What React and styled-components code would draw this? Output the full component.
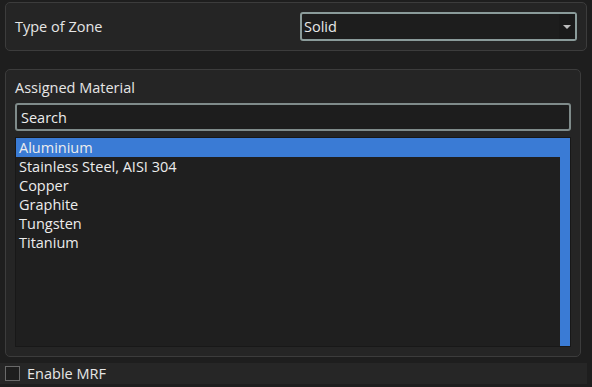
import React from "react";
import styled, { createGlobalStyle } from "styled-components";

const GlobalStyle = createGlobalStyle`
  html, body {
    margin: 0;
    padding: 0;
    background-color: #1e1e1e;
    font-family: "Open Sans", "Noto Sans", sans-serif;
    font-size: 14.5px;
    color: #e8e8e8;
  }
`;

const Page = styled.div`
  width: 592px;
  height: 387px;
  box-sizing: border-box;
  display: flex;
  flex-direction: column;
  padding-top: 2px;
`;

const Panel = styled.div`
  margin-left: 5px;
  width: ${(p) => p.width}px;
  height: ${(p) => p.height}px;
  box-sizing: border-box;
  background-color: #252525;
  border: 1px solid #3c3c3c;
  border-radius: 5px;
`;

const ZoneRow = styled.div`
  display: flex;
  align-items: center;
  justify-content: space-between;
  height: 100%;
  padding: 0 9px 0 9px;
`;

const Label = styled.span`
  font-size: 14.5px;
  color: #e6e6e6;
`;

const Combo = styled.div`
  position: relative;
  width: 277px;
  height: 29px;
  box-sizing: border-box;
  border: 2px solid #8a9b9a;
  border-radius: 3px;
  background-color: #1d1d1d;
  display: flex;
  align-items: center;
  padding-left: 2px;
`;

const Arrow = styled.div`
  position: absolute;
  right: 0;
  top: 0;
  bottom: 0;
  width: 16px;
  background-color: #1a1a1a;
  display: flex;
  align-items: center;
  justify-content: center;

  &::after {
    content: "";
    border-left: 4px solid transparent;
    border-right: 4px solid transparent;
    border-top: 4px solid #bdbdbd;
  }
`;

const MaterialBody = styled.div`
  display: flex;
  flex-direction: column;
  padding: 8px 9px 0 9px;
`;

const Search = styled.div`
  margin-top: 6px;
  height: 28px;
  box-sizing: border-box;
  border: 2px solid #7f8b8a;
  border-radius: 3px;
  background-color: #1d1d1d;
  display: flex;
  align-items: center;
  padding: 1px 0 0 4px;
  color: #ececec;
`;

const List = styled.div`
  position: relative;
  margin-top: 6px;
  height: 210px;
  box-sizing: border-box;
  border: 1px solid #181818;
  background-color: #1f1f1f;
  display: flex;
  flex-direction: column;
  padding-right: 10px;
`;

const Item = styled.div`
  height: 19px;
  line-height: 19px;
  padding-left: 3px;
  background-color: ${(p) => (p.selected ? "#3a7bd5" : "transparent")};
  color: #ececec;
`;

const Scrollbar = styled.div`
  position: absolute;
  right: 0;
  top: 0;
  bottom: 0;
  width: 10px;
  background-color: #3a7bd5;
`;

const Footer = styled.div`
  margin-top: 6px;
  width: 587px;
  height: 21px;
  background-color: #262626;
  display: flex;
  align-items: center;
  gap: 7px;
  padding-left: 5px;
  box-sizing: border-box;
`;

const Check = styled.div`
  width: 15px;
  height: 15px;
  box-sizing: border-box;
  border: 1px solid #6a6a6a;
  background-color: #1e1e1e;
`;

const materials = [
  "Aluminium",
  "Stainless Steel, AISI 304",
  "Copper",
  "Graphite",
  "Tungsten",
  "Titanium",
];

export default function App() {
  return (
    <>
      <GlobalStyle />
      <Page>
        <Panel width={582} height={49}>
          <ZoneRow>
            <Label>Type of Zone</Label>
            <Combo>
              Solid
              <Arrow />
            </Combo>
          </ZoneRow>
        </Panel>
        <Panel width={576} height={288} style={{ marginTop: 18 }}>
          <MaterialBody>
            <Label>Assigned Material</Label>
            <Search>Search</Search>
            <List>
              {materials.map((m, i) => (
                <Item key={m} selected={i === 0}>
                  {m}
                </Item>
              ))}
              <Scrollbar />
            </List>
          </MaterialBody>
        </Panel>
        <Footer>
          <Check />
          <Label>Enable MRF</Label>
        </Footer>
      </Page>
    </>
  );
}
